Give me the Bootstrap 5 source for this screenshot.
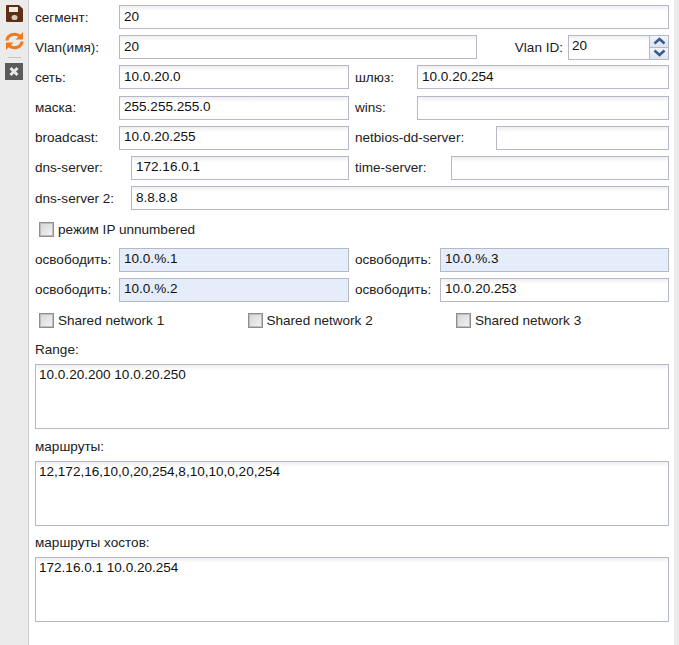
<!DOCTYPE html>
<html lang="en">
  <head>
    <meta charset="UTF-8" />
    <title>Сегмент</title>
    <link href="https://cdn.jsdelivr.net/npm/bootstrap@5.3.0/dist/css/bootstrap.min.css" rel="stylesheet" />
    <style>
      html, body { height: 100%; }
      body { font: 13.55px/16px "Liberation Sans", Arial, sans-serif; color: #222; background: #fff; overflow: hidden; }
      .shell { height: 645px; }
      .toolbar { width: 29px; background: #ebebeb; border-right: 1px solid #ccc; padding-top: 5px; }
      .tool-refresh { margin-top: 10px; }
      .tool-sep { width: 13px; height: 1px; background: #c8c3b4; margin: 7px 0 5px; }
      .form-area { width: 645px; padding: 5px 5px 0 6px; }
      .edge { width: 5px; background: #ebebeb; }
      .form-line { height: 24px; margin-bottom: 6.2px; }
      .form-line span { padding-top: 1px; }
      .half { width: 314px; }
      .gap-half { width: 6px; }
      .fld { height: 24px; min-width: 0; flex: 1 1 0; padding: 0 4px 2px; border: 1px solid #b5b8c8; background: linear-gradient(#eeeeee, #fff 5px); font: inherit; color: #111; outline: 0; }
      .fld.busy { background: #e5edfb; }
      .fld-vlan { flex: none; width: 358px; }
      .lbl-84 { width: 84px; }
      .lbl-96 { width: 96px; }
      .lbl-62 { width: 62px; }
      .lbl-85 { width: 85px; }
      .lbl-141 { width: 141px; }
      .form-line .lbl-vlan { padding-right: 5px; }
      .spin-box { width: 101px; height: 25px; border: 1px solid #b5b8c8; background: linear-gradient(#eeeeee, #fff 5px); }
      .spin-box input { width: 80px; border: 0; background: transparent; padding: 0 3px 2px; font: inherit; color: #111; outline: 0; }
      .spin-btns { width: 20px; border-left: 1px solid #b5b8c8; }
      .spin-btn { height: 50%; background: linear-gradient(#f2f5fb, #dde4f0); }
      .spin-btn + .spin-btn { border-top: 1px solid #b5b8c8; }
      .fake-check { width: 15px; height: 15px; border: 1px solid #8f8f8f; box-shadow: inset 0 0 0 1px #bdbdbd; background: linear-gradient(135deg, #d5d5d5, #f4f4f4); flex: none; margin-right: 4px; appearance: none; }
      .check-line { padding-left: 4px; position: relative; top: 1px; }
      .after-check { margin-top: 7.2px; }
      .share-item { width: 208.5px; }
      .ta-label { height: 16px; margin-bottom: 6px; }
      .first-label { margin-top: 10.2px; }
      .fld-area { display: block; width: 634px; height: 65px; padding: 2px 3px; border: 1px solid #b5b8c8; background: linear-gradient(#eeeeee, #fff 5px); font: inherit; color: #111; resize: none; outline: 0; margin-bottom: 9.6px; }
    </style>
  </head>
  <body>
    <div class="shell d-flex">
      <div class="toolbar d-flex flex-column align-items-center flex-shrink-0">
        <svg width="17" height="17" viewBox="0 0 17 17" class="d-block">
          <path d="M1 0h12l4 4v12a1 1 0 0 1-1 1H1a1 1 0 0 1-1-1V1a1 1 0 0 1 1-1z" fill="#5c2f14" />
          <rect x="3" y="2" width="9" height="5" fill="#f1e9e2" />
          <rect x="5.500" y="10" width="6" height="5" rx="2.500" fill="#d9c9bc" />
        </svg>
        <svg width="19" height="18" viewBox="0 0 19 18" class="d-block tool-refresh">
          <path d="M2 8.500a7.500 6.500 0 0 1 12.500-4.500" fill="none" stroke="#f07a1e" stroke-width="3.200" />
          <path d="M18 0v7.500h-7.500z" fill="#f07a1e" />
          <path d="M17 9.500a7.500 6.500 0 0 1-12.500 4.500" fill="none" stroke="#f07a1e" stroke-width="3.200" />
          <path d="M1 18v-7.500h7.500z" fill="#f07a1e" />
        </svg>
        <div class="tool-sep"></div>
        <svg width="18" height="17" viewBox="0 0 18 17" class="d-block">
          <rect width="18" height="17" fill="#5a5a5a" />
          <path d="M5.500 5l7 7M12.500 5l-7 7" stroke="#e8e8e8" stroke-width="3" />
        </svg>
      </div>
      <div class="form-area flex-shrink-0">
        <div class="form-line d-flex align-items-center">
          <span class="lbl-84">сегмент:</span><input class="fld" value="20" />
        </div>
        <div class="form-line d-flex align-items-center">
          <span class="lbl-84">Vlan(имя):</span><input class="fld fld-vlan" value="20" />
          <span class="ms-auto lbl-vlan text-nowrap">Vlan ID:</span>
          <div class="spin-box d-flex flex-shrink-0">
            <input value="20" />
            <div class="spin-btns d-flex flex-column flex-grow-1">
              <div class="spin-btn d-flex align-items-center justify-content-center">
                <svg width="13" height="8" viewBox="0 0 13 8"><path d="M1.500 6.500l5-4.500 5 4.500" fill="none" stroke="#3a5a90" stroke-width="2.600" /></svg>
              </div>
              <div class="spin-btn d-flex align-items-center justify-content-center">
                <svg width="13" height="8" viewBox="0 0 13 8"><path d="M1.500 1.500l5 4.500 5-4.500" fill="none" stroke="#3a5a90" stroke-width="2.600" /></svg>
              </div>
            </div>
          </div>
        </div>
        <div class="form-line d-flex">
          <div class="half d-flex align-items-center"><span class="lbl-84">сеть:</span><input class="fld" value="10.0.20.0" /></div>
          <div class="gap-half"></div>
          <div class="half d-flex align-items-center"><span class="lbl-62">шлюз:</span><input class="fld" value="10.0.20.254" /></div>
        </div>
        <div class="form-line d-flex">
          <div class="half d-flex align-items-center"><span class="lbl-84">маска:</span><input class="fld" value="255.255.255.0" /></div>
          <div class="gap-half"></div>
          <div class="half d-flex align-items-center"><span class="lbl-62">wins:</span><input class="fld" /></div>
        </div>
        <div class="form-line d-flex">
          <div class="half d-flex align-items-center"><span class="lbl-84">broadcast:</span><input class="fld" value="10.0.20.255" /></div>
          <div class="gap-half"></div>
          <div class="half d-flex align-items-center"><span class="lbl-141">netbios-dd-server:</span><input class="fld" /></div>
        </div>
        <div class="form-line d-flex">
          <div class="half d-flex align-items-center"><span class="lbl-96">dns-server:</span><input class="fld" value="172.16.0.1" /></div>
          <div class="gap-half"></div>
          <div class="half d-flex align-items-center"><span class="lbl-96">time-server:</span><input class="fld" /></div>
        </div>
        <div class="form-line d-flex align-items-center">
          <span class="lbl-96">dns-server 2:</span><input class="fld" value="8.8.8.8" />
        </div>
        <div class="form-line d-flex align-items-center check-line">
          <input type="checkbox" class="fake-check" /><span>режим IP unnumbered</span>
        </div>
        <div class="form-line d-flex after-check">
          <div class="half d-flex align-items-center"><span class="lbl-84">освободить:</span><input class="fld busy" value="10.0.%.1" /></div>
          <div class="gap-half"></div>
          <div class="half d-flex align-items-center"><span class="lbl-85">освободить:</span><input class="fld busy" value="10.0.%.3" /></div>
        </div>
        <div class="form-line d-flex">
          <div class="half d-flex align-items-center"><span class="lbl-84">освободить:</span><input class="fld busy" value="10.0.%.2" /></div>
          <div class="gap-half"></div>
          <div class="half d-flex align-items-center"><span class="lbl-85">освободить:</span><input class="fld" value="10.0.20.253" /></div>
        </div>
        <div class="form-line d-flex align-items-center check-line">
          <div class="share-item d-flex align-items-center"><input type="checkbox" class="fake-check" /><span>Shared network 1</span></div>
          <div class="share-item d-flex align-items-center"><input type="checkbox" class="fake-check" /><span>Shared network 2</span></div>
          <div class="share-item d-flex align-items-center"><input type="checkbox" class="fake-check" /><span>Shared network 3</span></div>
        </div>
        <div class="ta-label first-label">Range:</div>
        <textarea class="fld-area">10.0.20.200 10.0.20.250</textarea>
        <div class="ta-label">маршруты:</div>
        <textarea class="fld-area">12,172,16,10,0,20,254,8,10,10,0,20,254</textarea>
        <div class="ta-label">маршруты хостов:</div>
        <textarea class="fld-area">172.16.0.1 10.0.20.254</textarea>
      </div>
      <div class="edge flex-grow-1"></div>
    </div>
    <script src="https://cdn.jsdelivr.net/npm/bootstrap@5.3.0/dist/js/bootstrap.bundle.min.js"></script>
  </body>
</html>
